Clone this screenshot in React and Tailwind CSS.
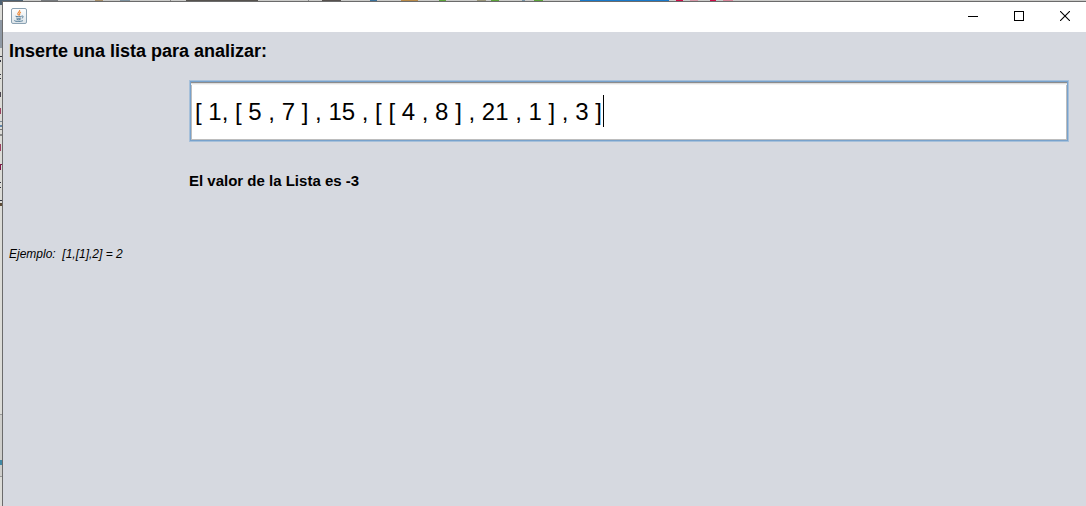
import React from 'react';

const topMarks = [
  [0, 23, '#4e6273'], [41, 17, '#777b7e'], [95, 8, '#a58d68'], [120, 10, '#7d929f'],
  [170, 1, '#888888'], [186, 72, '#55524e'], [308, 1, '#888888'], [322, 19, '#56514e'],
  [370, 7, '#39719b'], [401, 17, '#b98b49'], [439, 7, '#5da33b'], [477, 9, '#999478'],
  [491, 8, '#5da33b'], [522, 3, '#7794a9'], [534, 9, '#5da33b'], [580, 89, '#1979ca'],
  [676, 7, '#cc0d47'], [690, 8, '#d697a7'], [710, 6, '#cc0d47'], [723, 10, '#d68599'],
];

const sideMarks = [
  [0, 2, 5, '#4e6273'], [20, 2, 28, '#8e98a4'], [56, 2, 1, '#31333f'], [60, 1, 2, '#31333f'],
  [74, 1, 1, '#31333f'], [78, 1, 1, '#31333f'], [92, 1, 5, '#4b4650'], [108, 1, 6, '#9a4060'],
  [121, 2, 1, '#7b8b99'], [125, 2, 2, '#6187aa'], [129, 2, 1, '#777777'], [134, 2, 2, '#888888'],
  [144, 1, 7, '#9a4060'], [164, 2, 1, '#7f1748'], [165, 1, 5, '#7f1748'], [182, 1, 1, '#31333f'],
  [187, 1, 1, '#31333f'], [200, 2, 1, '#31333f'], [203, 2, 3, '#5c4a34'],
  [414, 2, 1, '#999999'], [460, 2, 5, '#4189a5'], [476, 2, 1, '#999999'],
];

function JavaIcon() {
  return (
    <svg width="16" height="16" viewBox="0 0 16 16" aria-hidden="true">
      <defs>
        <linearGradient id="tile" x1="0" y1="0" x2="0" y2="1">
          <stop offset="0" stopColor="#ffffff" />
          <stop offset="1" stopColor="#dce4e9" />
        </linearGradient>
      </defs>
      <rect x=".5" y=".5" width="15" height="15" rx="1.5" fill="url(#tile)" stroke="#8ba2b3" />
      <path d="M8.6 2c.8 1.7-2.6 2.5-1.7 4.2.2.5.7.8.9 1.1M9.9 4.1C7.4 5.3 9.7 5.8 8.2 7.5" fill="none" stroke="#ed8532" strokeWidth="1.1" />
      <path d="M4.5 8.2c1.6.7 5.1.6 6.2 0M5.3 10c1.3.6 3.4.6 4.6 0M10.9 8.1c2-.3 1.6 1.6-.1 2M5.7 11.5c1 .4 2.8.4 3.8 0M3.5 12.3c-.9 1.4 7.6 1.5 8.5.1" fill="none" stroke="#527b98" />
    </svg>
  );
}

export default function App() {
  return (
    <div className="relative flex min-h-screen flex-col bg-[#d6d9e0] pl-[3px] pt-[2px] font-['Liberation_Sans',Arial,sans-serif] text-black">
      <svg className="absolute inset-0 h-full w-full" aria-hidden="true">
        <rect width="2" height="100%" fill="#dcdcd8" />
        <rect y="414" width="2" height="62" fill="#cececb" />
        <rect width="100%" height="1" fill="#cbcbc9" />
        {sideMarks.map(([y, w, h, c]) => <rect key={y} y={y} width={w} height={h} fill={c} />)}
        {topMarks.map(([x, w, c]) => <rect key={x} x={x} width={w} height="1" fill={c} />)}
        <rect x="2" y="1" width="1" height="100%" fill="#6b6b6b" />
        <rect x="2" y="1" width="100%" height="1" fill="#6b6b6b" />
      </svg>

      <header className="relative flex h-[30px] items-center justify-between bg-white pb-[2px] pl-2 pr-4">
        <JavaIcon />
        <div className="flex gap-9">
          <button type="button" aria-label="Minimizar">
            <svg width="10" height="10" shapeRendering="crispEdges"><path d="M0 5.5h10" stroke="#000" /></svg>
          </button>
          <button type="button" aria-label="Maximizar">
            <svg width="10" height="10" shapeRendering="crispEdges"><rect x=".5" y=".5" width="9" height="9" fill="none" stroke="#000" /></svg>
          </button>
          <button type="button" aria-label="Cerrar">
            <svg width="10" height="10"><path d="M0 0l10 10M10 0L0 10" stroke="#000" strokeWidth="1.1" /></svg>
          </button>
        </div>
      </header>

      <main className="relative flex flex-col px-[6px] pt-[9px]">
        <label htmlFor="lista" className="text-[18px] font-bold leading-5">Inserte una lista para analizar:</label>
        <div className="relative ml-[180px] mr-[11px] mt-[19px] border border-[#a6c0da]">
          <input
            id="lista"
            type="text"
            spellCheck={false}
            defaultValue="[ 1, [ 5 , 7 ] , 15 , [ [ 4 , 8 ] , 21 , 1 ] , 3 ]"
            className="block h-[60px] w-full border border-[#78a2cc] bg-white pl-1 pt-[2px] text-[24px] shadow-[inset_0_1px_0_#8c8c8c,inset_0_2px_0_#dddddd,inset_0_3px_0_#f3f3f3,inset_0_0_0_1px_#bdbdbd] outline-none"
          />
          <span className="absolute left-[413px] top-[14px] h-8 w-px bg-black" aria-hidden="true" />
        </div>
        <output htmlFor="lista" className="ml-[180px] mt-[29px] text-[15px] font-bold leading-5">El valor de la Lista es -3</output>
        <p className="mt-[53px] whitespace-pre text-[12px] italic leading-5">{'Ejemplo:  [1,[1],2] = 2'}</p>
      </main>
    </div>
  );
}
